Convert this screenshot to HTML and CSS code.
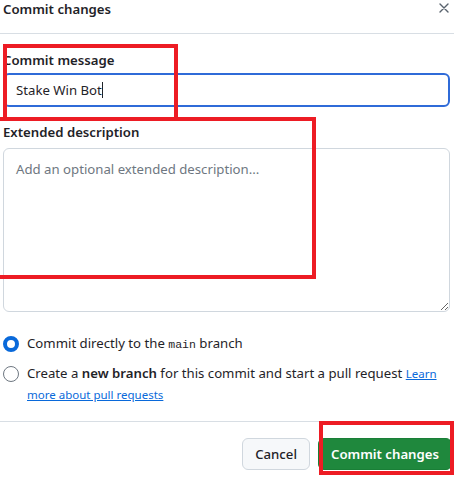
FILE: index.html
```html
<!doctype html>
<html lang="en">
  <head>
    <meta charset="UTF-8" />
    <meta name="viewport" content="width=device-width, initial-scale=1.0" />
    <title>Commit changes</title>
    <link rel="stylesheet" href="styles.css">
  </head>

  <body>
    <div class="dialog">
      <div class="dialog-header">
        <h1 class="dialog-title">Commit changes</h1>
        <button class="close-btn" aria-label="Close">
          <svg width="10" height="10" viewBox="0 0 10 10">
            <path d="M1 1 L9 9 M9 1 L1 9" stroke="#59636e" stroke-width="1.4" stroke-linecap="round" />
          </svg>
        </button>
      </div>

      <div class="dialog-body">
        <div class="field">
          <label class="field-label">Commit message</label>
          <div class="text-input focused">
            <span>Stake Win Bot</span><span class="caret"></span>
          </div>
        </div>

        <div class="field">
          <label class="field-label label-gap">Extended description</label>
          <textarea class="text-area" placeholder="Add an optional extended description..."></textarea>
        </div>

        <div class="choices">
          <div class="choice">
            <span class="radio checked"></span>
            <span class="choice-text">Commit directly to the <code>main</code> branch</span>
          </div>
          <div class="choice">
            <span class="radio"></span>
            <div class="choice-text">
              <span>Create a <strong>new branch</strong> for this commit and start a pull request</span>
              <a href="#" class="link">Learn</a>
              <a href="#" class="link">more about pull requests</a>
            </div>
          </div>
        </div>
      </div>

      <div class="dialog-footer">
        <button class="btn">Cancel</button>
        <button class="btn btn-primary">Commit changes</button>
      </div>
    </div>

    <!-- red annotation boxes drawn over the screenshot -->
    <div class="mark mark-message"></div>
    <div class="mark mark-description"></div>
    <div class="mark mark-submit"></div>
  </body>
</html>
```

FILE: styles.css
```css
body {
  margin: 0;
  font-family: 'Noto Sans', 'Open Sans', sans-serif;
  font-size: 13.2px;
  color: #1f2328;
  background: #ffffff;
  overflow: hidden;
}
.dialog {
  width: 454px;
}
.dialog-header {
  display: flex;
  justify-content: space-between;
  align-items: flex-start;
  box-sizing: border-box;
  height: 34px;
  padding: 0 5px 0 3px;
  border-bottom: 1px solid #d8dee4;
}
.dialog-title {
  margin: 0;
  font-size: 13.2px;
  font-weight: 600;
  line-height: 18px;
}
.close-btn {
  border: none;
  background: none;
  padding: 0;
  margin-top: 3px;
  width: 10px;
  height: 10px;
  display: flex;
}
.dialog-body {
  padding: 16px 4px 0 3px;
}
.field {
  display: flex;
  flex-direction: column;
  margin-bottom: 15px;
}
.field-label {
  display: block;
  font-weight: 600;
  line-height: 20px;
  margin-bottom: 3px;
}
.field-label.label-gap {
  margin-bottom: 6px;
}
.text-input {
  display: flex;
  align-items: center;
  box-sizing: border-box;
  height: 34px;
  padding: 0 11px;
  border: 2px solid #2f6bd8;
  border-radius: 6px;
  line-height: 20px;
}
.caret {
  display: inline-block;
  width: 1px;
  height: 16px;
  background: #1f2328;
}
.text-area {
  box-sizing: border-box;
  height: 164px;
  margin: 0;
  padding: 10px 12px;
  font-family: inherit;
  font-size: 13.2px;
  line-height: 20px;
  color: #1f2328;
  border: 1px solid #d0d7de;
  border-radius: 6px;
  resize: vertical;
}
.text-area::placeholder {
  color: #6e7781;
}
.choices {
  display: flex;
  flex-direction: column;
  gap: 8px;
  padding-top: 6px;
  padding-bottom: 16px;
}
.choice {
  display: flex;
  align-items: flex-start;
  gap: 8px;
  line-height: 21px;
}
.radio {
  flex: none;
  box-sizing: border-box;
  width: 16px;
  height: 16px;
  margin-top: 3px;
  border: 1px solid #6e7781;
  border-radius: 50%;
}
.radio.checked {
  border: 4px solid #0969da;
}
code {
  font-family: 'Liberation Mono', monospace;
  font-size: 11.5px;
}
strong {
  font-weight: 600;
}
.link {
  color: #0969da;
  font-size: 11.5px;
  text-decoration: underline;
}
.dialog-footer {
  display: flex;
  justify-content: flex-end;
  gap: 8px;
  padding: 16px 2px 0 0;
  border-top: 1px solid #d8dee4;
}
.btn {
  height: 32px;
  padding: 0 12px;
  font-family: inherit;
  font-size: 13.2px;
  font-weight: 500;
  color: #1f2328;
  background: #f6f8fa;
  border: 1px solid #d0d7de;
  border-radius: 6px;
}
.btn-primary {
  font-weight: 600;
  color: #ffffff;
  background: #1f883d;
  border-color: #1a7f37;
}
.mark {
  position: absolute;
  box-sizing: border-box;
  border: 4px solid #ed1c24;
}
.mark-message {
  left: 3px;
  top: 44px;
  width: 175px;
  height: 77px;
}
.mark-description {
  left: -10px;
  top: 117px;
  width: 326px;
  height: 162px;
}
.mark-submit {
  left: 319px;
  top: 421px;
  width: 135px;
  height: 54px;
}
```
